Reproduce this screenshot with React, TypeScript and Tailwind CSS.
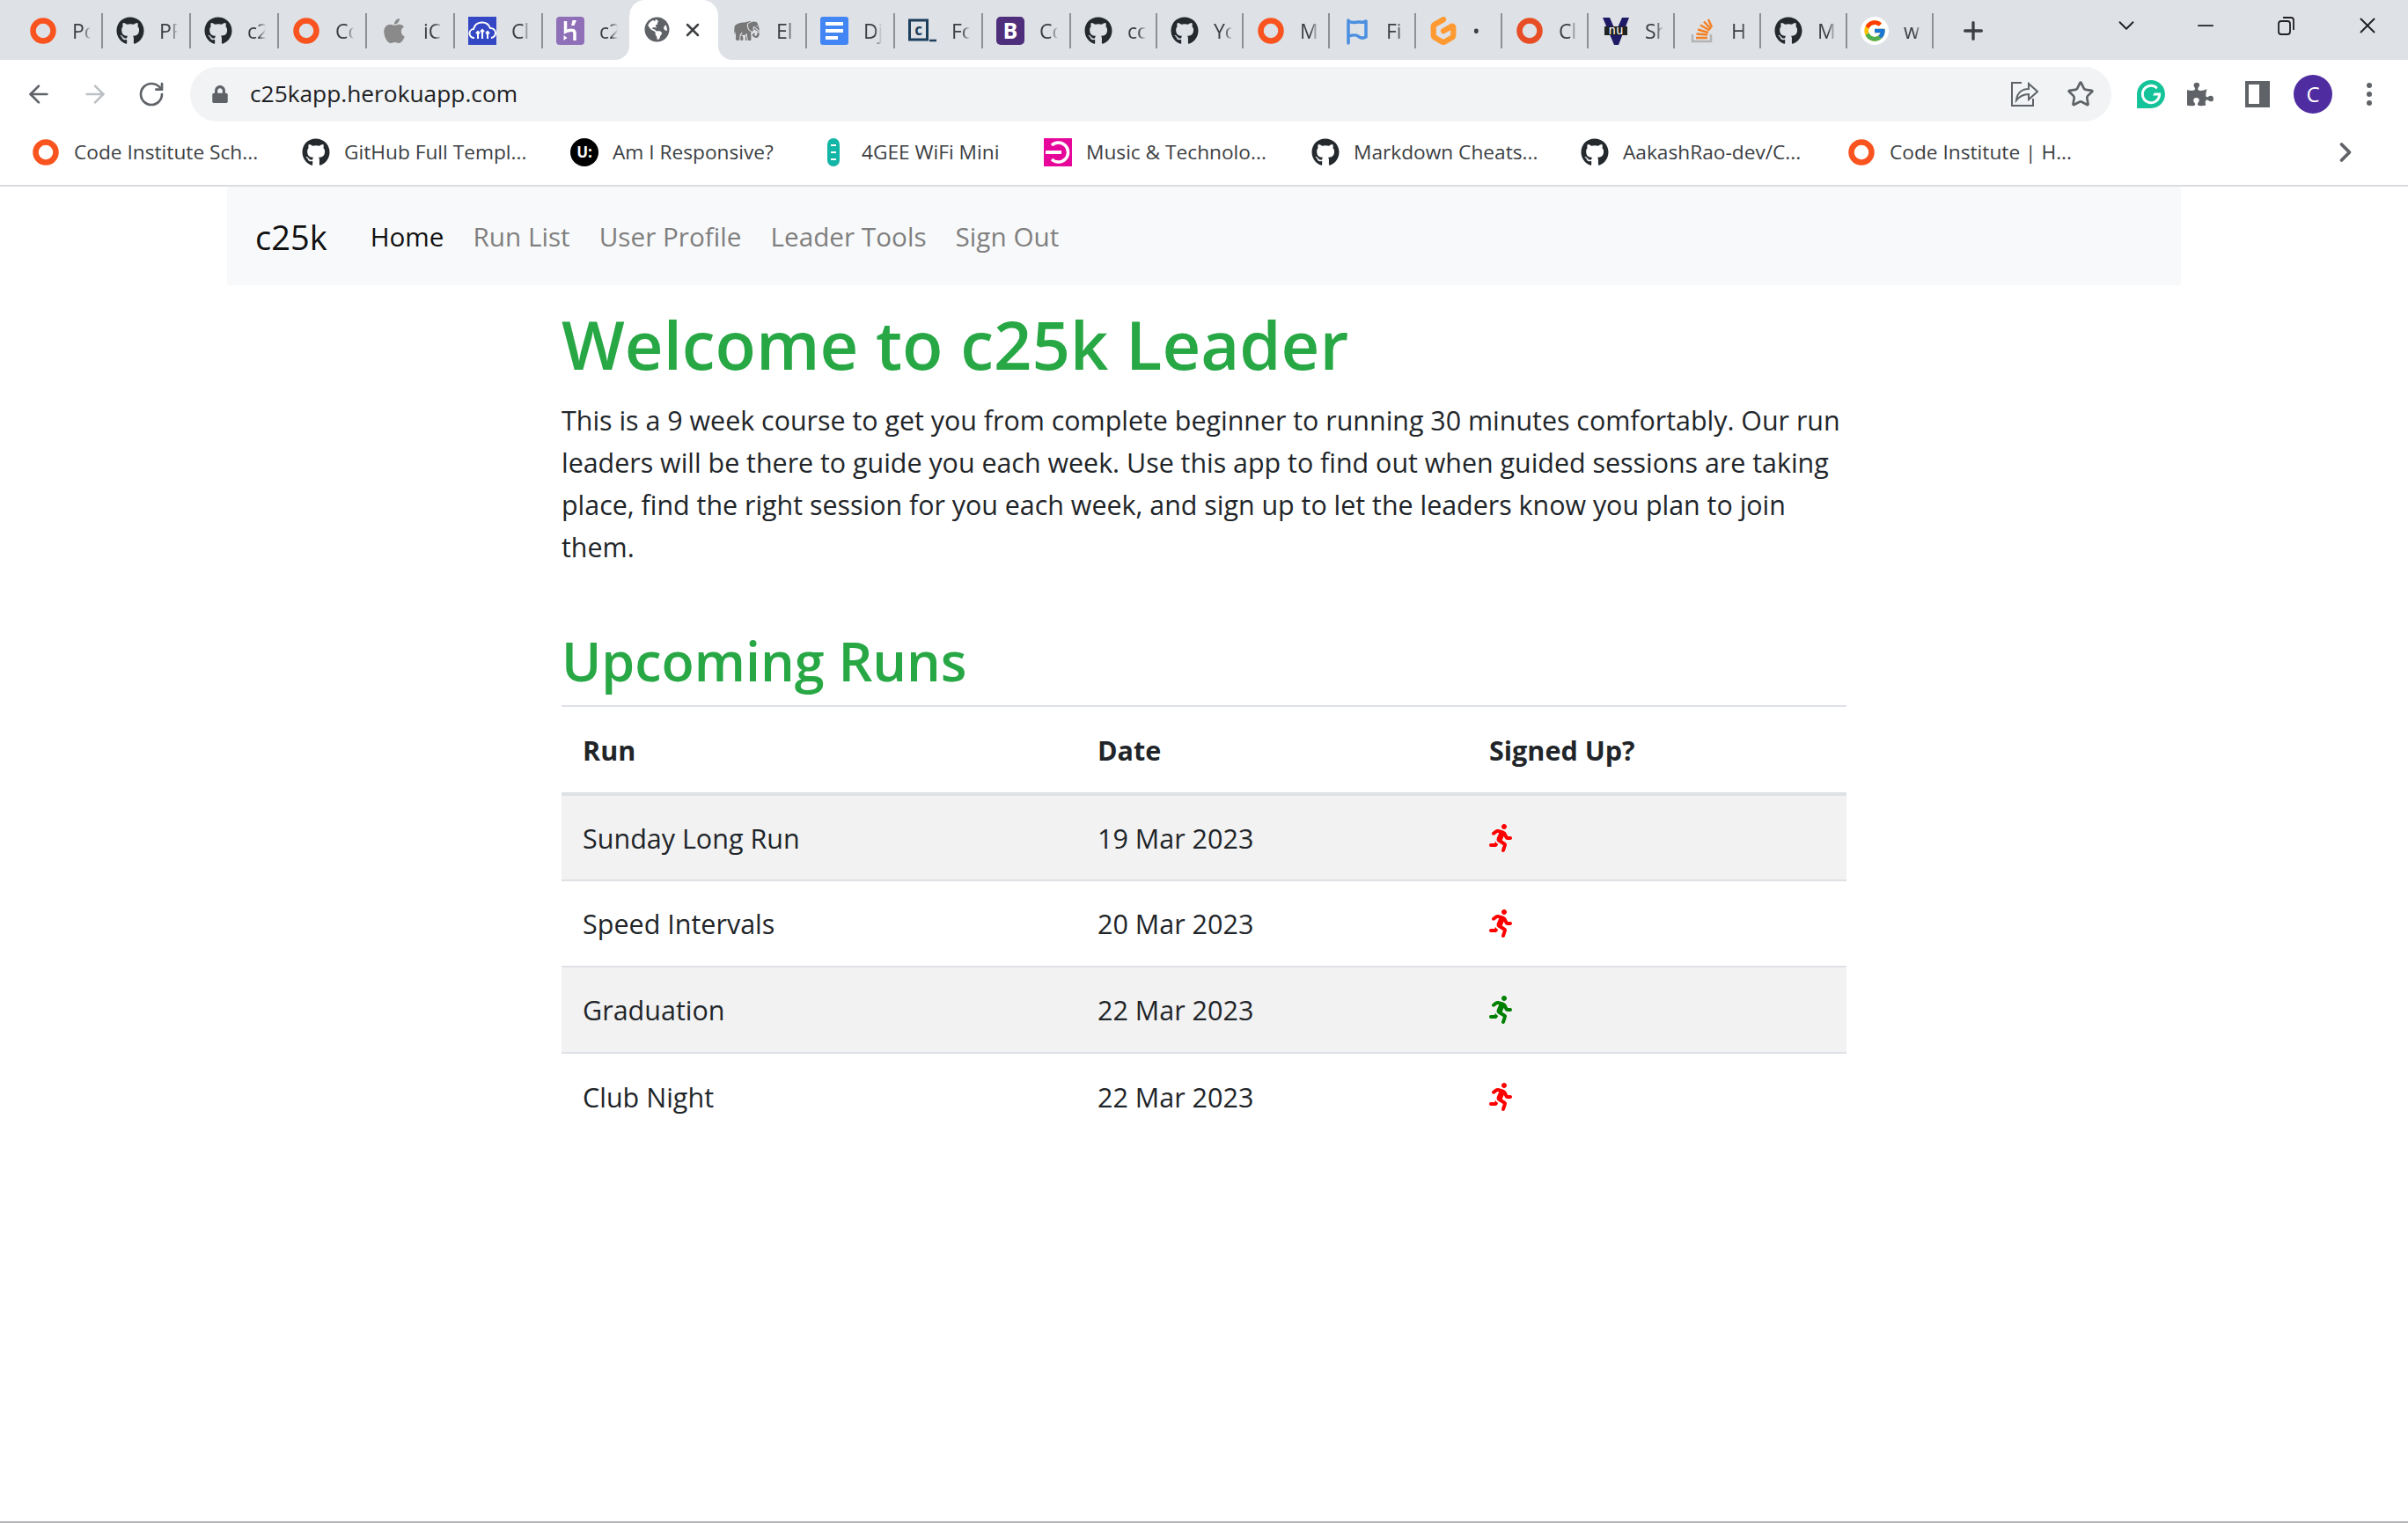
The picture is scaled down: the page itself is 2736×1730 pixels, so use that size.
import React from 'react';
import { ArrowLeft, ArrowRight, ChevronDown, ChevronRight, Minus, Plus, RotateCw, Star, X } from 'lucide-react';
import { FaApple, FaGithub, FaGlobeAmericas, FaLock, FaPuzzlePiece, FaRunning } from 'react-icons/fa';
import { FcGoogle } from 'react-icons/fc';
import { GiElephant } from 'react-icons/gi';
import { SiGitpod, SiGrammarly } from 'react-icons/si';

const Ring = ({ color = '#f9541f' }: { color?: string }) => (
  <svg viewBox="0 0 32 32" className="w-8 h-8">
    <circle cx="16" cy="16" r="11.5" fill="none" stroke={color} strokeWidth="6.5" />
  </svg>
);

const Github = () => <FaGithub className="w-8 h-8 text-[#24292e]" />;

const Cloudinary = () => (
  <svg viewBox="0 0 32 32" className="w-8 h-8">
    <rect width="32" height="32" fill="#3448c5" />
    <path d="M7 24a5 5 0 0 1-1-10 10 10 0 0 1 19-1 5.500 5.500 0 0 1 1 11" fill="none" stroke="#fff" strokeWidth="2" />
    <path d="M11 25v-7M16 25v-9M22 25v-7M9 19l2-2 2 2M14 17l2-2 2 2M20 19l2-2 2 2" fill="none" stroke="#fff" strokeWidth="2" />
  </svg>
);

const Heroku = () => (
  <svg viewBox="0 0 32 32" className="w-8 h-8">
    <rect width="32" height="32" rx="4" fill="#8f6fb8" />
    <path d="M10.500 5v12c4-2 10-3 10.500 1v9" fill="none" stroke="#fff" strokeWidth="3.500" />
    <path d="M23 4l-2.500 6h-3.500l1.500-6zM8.500 27v-6l4 3z" fill="#fff" />
  </svg>
);

const Docs = () => (
  <svg viewBox="0 0 32 32" className="w-8 h-8">
    <rect width="32" height="32" rx="3" fill="#4285f4" />
    <path d="M6 6h20v4H6zM6 14h20v4H6zM6 22h14v4H6z" fill="#fff" />
  </svg>
);

const Terminal = () => (
  <svg viewBox="0 0 32 32" className="w-8 h-8">
    <rect x="1.500" y="4" width="20" height="22" fill="none" stroke="#1d3f5c" strokeWidth="3" />
    <text x="11.500" y="21" textAnchor="middle" fontSize="17" fontWeight="700" fill="#1d3f5c" fontFamily="Open Sans">c</text>
    <path d="M24 27h8" stroke="#1d3f5c" strokeWidth="2.500" />
  </svg>
);

const Bootstrap = () => (
  <svg viewBox="0 0 32 32" className="w-8 h-8">
    <rect width="32" height="32" rx="5" fill="#4f2f7c" />
    <text x="16" y="25" textAnchor="middle" fontSize="25" fontWeight="700" fill="#fff" fontFamily="Open Sans">B</text>
  </svg>
);

const Flag = () => (
  <svg viewBox="0 0 32 32" className="w-8 h-8">
    <path d="M6 4v26M6 5c5 3 9 1 11 1s6 1 9-1v18c-4 2-7 1-9-1s-7-1-11 0" fill="none" stroke="#4a8fe0" strokeWidth="3.500" strokeLinecap="round" strokeLinejoin="round" />
  </svg>
);

const Validator = () => (
  <svg viewBox="0 0 32 32" className="w-8 h-8">
    <path d="M1 1h8l7 16 7-16h8L19 32h-5z" fill="#1f1a66" />
    <rect x="3" y="11" width="26" height="10" fill="#222" />
    <text x="16" y="20" textAnchor="middle" fontSize="14" fill="#fff" fontFamily="DejaVu Sans Mono">nu</text>
  </svg>
);

const StackOverflow = () => (
  <svg viewBox="0 0 32 32" className="w-8 h-8">
    <path d="M5 20v8h21v-8" fill="none" stroke="#b4b4b4" strokeWidth="2.500" />
    <path d="M9 24h13M9.500 19.500l12.500 1M11 14.500l12 3.500M14 9.500l10.500 6M18 5.500l8 8.500M23 3l4 9" fill="none" stroke="#f48024" strokeWidth="2.500" />
  </svg>
);

const tabs = [
  { icon: <Ring />, label: 'Pc', width: 'w-[100px] pl-[16px]' },
  { icon: <Github />, label: 'PF', width: 'w-[100px]' },
  { icon: <Github />, label: 'c2', width: 'w-[100px]' },
  { icon: <Ring />, label: 'Cc', width: 'w-[100px]' },
  { icon: <FaApple className="w-8 h-8 text-[#8a8a8a]" />, label: 'iC', width: 'w-[100px]' },
  { icon: <Cloudinary />, label: 'Cl', width: 'w-[100px]' },
  { icon: <Heroku />, label: 'c2', width: 'w-[100px]' },
];

const tabsAfter = [
  { icon: <GiElephant className="w-8 h-8 text-[#777]" />, label: 'El', width: 'w-[99px] pl-[14px]' },
  { icon: <Docs />, label: 'Dj', width: 'w-[100px]' },
  { icon: <Terminal />, label: 'Fc', width: 'w-[100px]' },
  { icon: <Bootstrap />, label: 'Cc', width: 'w-[100px]' },
  { icon: <Github />, label: 'cc', width: 'w-[98px]' },
  { icon: <Github />, label: 'Yc', width: 'w-[98px]' },
  { icon: <Ring />, label: 'M', width: 'w-[98px]' },
  { icon: <Flag />, label: 'Fi', width: 'w-[98px]' },
  { icon: <SiGitpod className="w-8 h-8 text-[#ff9a33]" />, label: '•', width: 'w-[98px]' },
  { icon: <Ring color="#e84e25" />, label: 'Cl', width: 'w-[98px]' },
  { icon: <Validator />, label: 'Sh', width: 'w-[98px]' },
  { icon: <StackOverflow />, label: 'H', width: 'w-[98px]' },
  { icon: <Github />, label: 'M', width: 'w-[98px]' },
  { icon: <span className="w-8 h-8 rounded-full bg-white flex items-center justify-center"><FcGoogle className="w-7 h-7" /></span>, label: 'w', width: 'w-[98px]' },
];

const Tab = ({ icon, label, width }: { icon: React.ReactNode; label: string; width: string }) => (
  <div className={`${width} h-10 shrink-0 pl-[15px] flex items-center gap-[17px] border-r-2 border-[#8d9094]`}>
    <span className="w-8 h-8 shrink-0 -mt-px">{icon}</span>
    <span className="w-[21px] overflow-hidden whitespace-nowrap text-[23px] text-[#3c4043] [mask-image:linear-gradient(to_right,black_60%,transparent)]">
      {label}
    </span>
  </div>
);

const bookmarks = [
  { icon: <Ring />, label: 'Code Institute Sch...', width: 'w-[307px]' },
  { icon: <Github />, label: 'GitHub Full Templ...', width: 'w-[305px]' },
  {
    icon: (
      <span className="w-8 h-8 rounded-full bg-black flex items-center justify-center text-white text-[17px] font-bold leading-none">U:</span>
    ),
    label: 'Am I Responsive?',
    width: 'w-[283px]',
  },
  {
    icon: (
      <svg viewBox="0 0 32 32" className="w-8 h-8">
        <rect x="9" width="14" height="32" rx="7" fill="#12b5a6" />
        <path d="M13 8h6M13 16h6M13 24h6" stroke="#fff" strokeWidth="2" />
      </svg>
    ),
    label: '4GEE WiFi Mini',
    width: 'w-[255px]',
  },
  {
    icon: (
      <svg viewBox="0 0 32 32" className="w-8 h-8">
        <rect width="32" height="32" fill="#e6079a" />
        <path d="M9 8a11 11 0 1 1 0 16" fill="none" stroke="#fff" strokeWidth="3.500" />
        <path d="M2 14h18v4H2z" fill="#fff" />
      </svg>
    ),
    label: 'Music & Technolo...',
    width: 'w-[304px]',
  },
  { icon: <Github />, label: 'Markdown Cheats...', width: 'w-[306px]' },
  { icon: <Github />, label: 'AakashRao-dev/C...', width: 'w-[303px]' },
  { icon: <Ring />, label: 'Code Institute | H...', width: 'w-[548px]' },
];

const runs = [
  { name: 'Sunday Long Run', date: '19 Mar 2023', signed: false },
  { name: 'Speed Intervals', date: '20 Mar 2023', signed: false },
  { name: 'Graduation', date: '22 Mar 2023', signed: true },
  { name: 'Club Night', date: '22 Mar 2023', signed: false },
];

const navLinks = ['Run List', 'User Profile', 'Leader Tools', 'Sign Out'];

const BrowserChrome = () => (
  <div className="text-[#3c4043]">
    {/* Tab strip */}
    <div className="h-[68px] bg-[#dee1e6] flex items-start pl-[17px]">
      <div className="flex pt-[15px] items-center">
        {tabs.map((t, i) => (
          <Tab key={i} {...t} />
        ))}
      </div>
      <div className="relative w-[101px] h-[68px] -ml-[2px] shrink-0 bg-white rounded-t-[18px] flex items-center pl-[17px] gap-[14px] pb-[1px]">
        <div className="absolute -left-4 bottom-0 w-4 h-4 bg-white">
          <div className="w-4 h-4 bg-[#dee1e6] rounded-br-[16px]" />
        </div>
        <div className="absolute -right-4 bottom-0 w-4 h-4 bg-white">
          <div className="w-4 h-4 bg-[#dee1e6] rounded-bl-[16px]" />
        </div>
        <FaGlobeAmericas className="w-[29px] h-[29px] text-[#5f6368]" />
        <X className="w-[24px] h-[24px] text-[#3c4043]" strokeWidth={2.500} />
      </div>
      <div className="flex pt-[15px] items-center ml-[2px]">
        {tabsAfter.map((t, i) => (
          <Tab key={i} {...t} />
        ))}
      </div>
      <Plus className="w-[32px] h-[32px] ml-[29px] mt-[19px] text-[#3c4043]" strokeWidth={2.500} />
      <ChevronDown className="w-[30px] h-[30px] ml-[143px] mt-[14px] text-[#202124]" strokeWidth={1.500} />
      <Minus className="w-[28px] h-[28px] ml-[61px] mt-[15px] text-[#202124]" strokeWidth={1.500} />
      <svg viewBox="0 0 24 24" className="w-[24px] h-[24px] ml-[66px] mt-[17px]" fill="none" stroke="#202124" strokeWidth="1.800">
        <rect x="3" y="7" width="13" height="15" rx="3" />
        <path d="M8 3h9a3 3 0 0 1 3 3v11" />
      </svg>
      <X className="w-[30px] h-[30px] ml-[65px] mt-[14px] text-[#202124]" strokeWidth={1.500} />
    </div>

    {/* Toolbar */}
    <div className="h-[70px] bg-white pt-2 flex items-start">
      <div className="w-[216px] h-[62px] shrink-0 flex items-center pl-[28px] gap-[32px]">
        <ArrowLeft className="w-8 h-8 text-[#5f6368]" strokeWidth={2} />
        <ArrowRight className="w-8 h-8 text-[#bdc1c6]" strokeWidth={2} />
        <RotateCw className="w-8 h-8 text-[#5f6368]" strokeWidth={2} />
      </div>
      <div className="w-[2183px] h-[62px] shrink-0 bg-[#f1f3f4] rounded-full flex items-center pl-[25px] pr-[19px]">
        <FaLock className="w-[18px] h-[20px] text-[#5f6368]" />
        <span className="ml-[25px] text-[26.300px] text-[#202124]">c25kapp.herokuapp.com</span>
        <svg viewBox="0 0 32 32" className="w-[32px] h-[32px] ml-auto" fill="none" stroke="#5f6368" strokeWidth="2">
          <path d="M13 4H2v26h24v-8" transform="translate(0 -1)" />
          <path d="M7 23c1-9 7-13 14-13V4l10 9-10 9v-6c-6 0-10 2-14 7z" />
        </svg>
        <Star className="w-8 h-8 ml-[32px] text-[#5f6368]" strokeWidth={2} />
      </div>
      <div className="h-[62px] flex items-center pl-[29px]">
        <span className="w-8 h-8 rounded-full bg-white flex items-center justify-center">
          <SiGrammarly className="w-8 h-8 text-[#15c39a]" />
        </span>
        <FaPuzzlePiece className="w-[30px] h-[30px] ml-[25px] text-[#5f6368]" />
        <span className="w-[28px] h-[30px] ml-[36px] border-[#5f6368] border-y-4 border-l-4 border-r-[12px]" />
        <span className="w-[44px] h-[44px] ml-[27px] rounded-full bg-[#4f2da0] flex items-center justify-center text-white text-[24px]">C</span>
        <span className="ml-[39px] flex flex-col gap-[4px]">
          <span className="w-[6px] h-[6px] rounded-full bg-[#5f6368]" />
          <span className="w-[6px] h-[6px] rounded-full bg-[#5f6368]" />
          <span className="w-[6px] h-[6px] rounded-full bg-[#5f6368]" />
        </span>
      </div>
    </div>

    {/* Bookmarks */}
    <div className="h-[74px] bg-white border-b-2 border-[#dadce0] flex items-center pl-[36px] pb-[2px] text-[22.700px] text-[#3c4043]">
      {bookmarks.map((b, i) => (
        <div key={i} className={`${b.width} shrink-0 flex items-center gap-[16px] whitespace-nowrap`}>
          <span className="w-8 h-8 shrink-0">{b.icon}</span>
          <span>{b.label}</span>
        </div>
      ))}
      <ChevronRight className="w-[36px] h-[36px] text-[#5f6368]" strokeWidth={2.500} />
    </div>
  </div>
);

const App: React.FC = () => {
  return (
    <div className="h-[1730px] bg-white overflow-hidden flex flex-col font-['Open_Sans',sans-serif] border-b-2 border-[#b5b5b8]">
      <BrowserChrome />

      <main className="w-[2220px] ml-[258px]">
        {/* Navbar */}
        <nav className="h-[112px] bg-[#f8f9fa] flex items-center pl-[32px] pt-[3px] text-[29.700px]">
          <span className="text-[38px] text-[#111] mr-[49px]">c25k</span>
          <span className="text-[#111]">Home</span>
          {navLinks.map((link) => (
            <span key={link} className="ml-[33px] text-[#7f7f7f]">
              {link}
            </span>
          ))}
        </nav>

        {/* Content */}
        <div className="w-[1460px] ml-[380px] text-[#212529]">
          <h1 className="text-[76px] leading-[96px] font-semibold text-[#28a745] mt-[19px] mb-[15px]">Welcome to c25k Leader</h1>
          <p className="text-[30.400px] leading-[48px] mb-[66px]">
            This is a 9 week course to get you from complete beginner to running 30 minutes comfortably. Our run leaders will be there to guide you each week. Use this app to find out when guided sessions are taking place, find the right session for you each week, and sign up to let the leaders know you plan to join them.
          </p>
          <h2 className="text-[61px] leading-[77px] font-semibold text-[#28a745] mb-[12px]">Upcoming Runs</h2>

          <table className="w-full table-fixed border-collapse text-[30.500px] leading-[48px]">
            <thead>
              <tr className="h-[100px] border-t-2 border-b-4 border-[#dee2e6]">
                <th className="w-[585px] px-6 text-left font-bold">Run</th>
                <th className="w-[445px] px-6 text-left font-bold">Date</th>
                <th className="px-6 text-left font-bold">Signed Up?</th>
              </tr>
            </thead>
            <tbody>
              {runs.map((run, i) => (
                <tr key={run.name} className={`h-[98px] ${i < 3 ? 'border-b-2 border-[#dee2e6]' : ''} ${i % 2 === 0 ? 'bg-[#f2f2f2]' : ''}`}>
                  <td className="px-6">{run.name}</td>
                  <td className="px-6">{run.date}</td>
                  <td className="px-6">
                    <FaRunning className={`w-[26px] h-[32px] ${run.signed ? 'text-[#008000]' : 'text-[#ff0000]'}`} />
                  </td>
                </tr>
              ))}
            </tbody>
          </table>
        </div>
      </main>
    </div>
  );
};

export default App;
